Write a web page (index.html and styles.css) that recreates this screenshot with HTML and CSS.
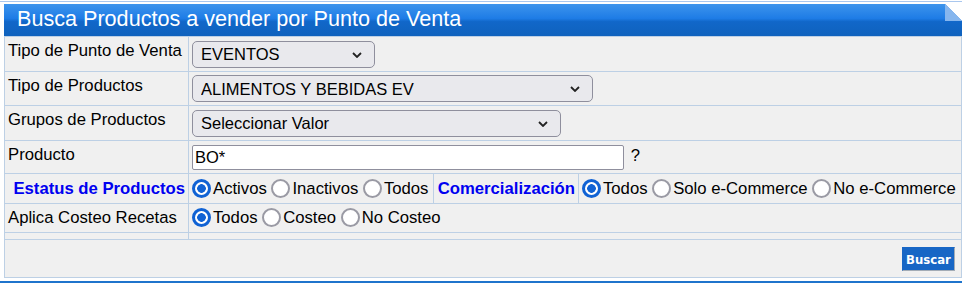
FILE: index.html
```html
<!DOCTYPE html>
<html lang="es">
<head>
    <meta charset="UTF-8">
    <title>Busca Productos a vender por Punto de Venta</title>
    <link rel="stylesheet" href="styles.css">
</head>
<body>
    <div class="topline"></div>

    <div class="panel">
        <div class="panel-header">Busca Productos a vender por Punto de Venta<span class="fold"></span></div>

        <table class="form-table">
            <colgroup>
                <col class="c1"><col class="c2"><col class="c3"><col class="c4">
            </colgroup>
            <tr class="r1">
                <td class="lbl">Tipo de Punto de Venta</td>
                <td colspan="3">
                    <span class="select-wrap w1">
                        <select><option>EVENTOS</option></select>
                        <svg class="chevron" width="10" height="6" viewBox="0 0 10 6"><path d="M1 1l4 4 4-4" fill="none" stroke="#222" stroke-width="1.8"/></svg>
                    </span>
                </td>
            </tr>
            <tr class="r2">
                <td class="lbl">Tipo de Productos</td>
                <td colspan="3">
                    <span class="select-wrap w2">
                        <select><option>ALIMENTOS Y BEBIDAS EV</option></select>
                        <svg class="chevron" width="10" height="6" viewBox="0 0 10 6"><path d="M1 1l4 4 4-4" fill="none" stroke="#222" stroke-width="1.8"/></svg>
                    </span>
                </td>
            </tr>
            <tr class="r3">
                <td class="lbl">Grupos de Productos</td>
                <td colspan="3">
                    <span class="select-wrap w3">
                        <select><option>Seleccionar Valor</option></select>
                        <svg class="chevron" width="10" height="6" viewBox="0 0 10 6"><path d="M1 1l4 4 4-4" fill="none" stroke="#222" stroke-width="1.8"/></svg>
                    </span>
                </td>
            </tr>
            <tr class="r4">
                <td class="lbl">Producto</td>
                <td colspan="3"><input class="text-input" type="text" value="BO*"> <span class="help">?</span></td>
            </tr>
            <tr class="r5">
                <td class="head">Estatus de Productos</td>
                <td>
                    <label class="opt"><input type="radio" name="estatus" checked>Activos</label>
                    <label class="opt"><input type="radio" name="estatus">Inactivos</label>
                    <label class="opt"><input type="radio" name="estatus">Todos</label>
                </td>
                <td class="head">Comercialización</td>
                <td>
                    <label class="opt"><input type="radio" name="comer" checked>Todos</label>
                    <label class="opt"><input type="radio" name="comer">Solo e-Commerce</label>
                    <label class="opt"><input type="radio" name="comer">No e-Commerce</label>
                </td>
            </tr>
            <tr class="r6">
                <td>Aplica Costeo Recetas</td>
                <td colspan="3">
                    <label class="opt"><input type="radio" name="costeo" checked>Todos</label>
                    <label class="opt"><input type="radio" name="costeo">Costeo</label>
                    <label class="opt"><input type="radio" name="costeo">No Costeo</label>
                </td>
            </tr>
            <tr class="r7">
                <td></td>
                <td colspan="3"></td>
            </tr>
        </table>

        <div class="actions">
            <button class="btn-buscar">Buscar</button>
        </div>
    </div>

    <div class="next-bar"></div>
</body>
</html>
```

FILE: styles.css
```css
body {
    margin: 0;
    font-family: "Liberation Sans", Arial, sans-serif;
    font-size: 16.7px;
    color: #000;
    background: #fff;
}
.topline {
    height: 1px;
    margin-top: 1px;
    background-color: #a9c7ee;
}
.panel {
    margin: 2px 0 0 4px;
}
.panel-header {
    position: relative;
    height: 32px;
    line-height: 30px;
    padding-left: 13px;
    font-size: 21.6px;
    color: #fff;
    background: linear-gradient(#3d94ec, #1e7ce6 45%, #1167c9 55%, #0f62bd);
}
.fold {
    position: absolute;
    top: 0;
    right: 0;
    width: 17px;
    height: 17px;
    background: linear-gradient(225deg, #fff 50%, #86b6ee 50%);
}
.form-table {
    width: 958px;
    table-layout: fixed;
    border-collapse: collapse;
    background-color: #f0f0f0;
}
.c1 { width: 184px; }
.c2 { width: 245px; }
.c3 { width: 145px; }
.form-table td {
    border: 1px solid #bdd0e5;
    padding: 0 3px;
    vertical-align: middle;
    white-space: nowrap;
}
.form-table td.lbl {
    vertical-align: top;
    padding-top: 4px;
}
.form-table td.head {
    text-align: right;
    font-weight: bold;
    color: #0000f0;
}
.r1 { height: 35px; }
.r2 { height: 34px; }
.r3 { height: 35px; }
.r4 { height: 33px; }
.r5 { height: 30px; }
.r6 { height: 29px; }
.r7 { height: 7px; }

.select-wrap {
    position: relative;
    display: inline-block;
    vertical-align: middle;
}
.select-wrap select {
    appearance: none;
    width: 100%;
    height: 27px;
    padding: 0 30px 0 8px;
    border: 1px solid #8f8f9d;
    border-radius: 5px;
    background-color: #e9e9ed;
    font-family: inherit;
    font-size: 16.5px;
    color: #000;
}
.select-wrap .chevron {
    position: absolute;
    right: 13px;
    top: 11px;
}
.w1 { width: 183px; }
.w2 { width: 401px; }
.w3 { width: 369px; }

.text-input {
    width: 432px;
    height: 25px;
    box-sizing: border-box;
    padding: 0 2px;
    border: 1px solid #8f8f9d;
    border-radius: 2px;
    background: #fff;
    font-family: inherit;
    font-size: 16.5px;
    vertical-align: middle;
}
.help {
    margin-left: 2px;
}

.opt input[type=radio] {
    appearance: none;
    width: 19px;
    height: 19px;
    margin: 0 2px 0 0;
    box-sizing: border-box;
    border: 2px solid #9a9aa4;
    border-radius: 50%;
    background: #fff;
    vertical-align: -4px;
}
.opt input[type=radio]:checked {
    border: 3px solid #1062d4;
    background: radial-gradient(circle, #1062d4 0 4px, #fff 4.6px);
}

.actions {
    padding: 7px 6px 0 0;
    box-sizing: border-box;
    height: 38px;
    border: 1px solid #bdd0e5;
    border-top: none;
    background-color: #f0f0f0;
    text-align: right;
}
.btn-buscar {
    width: 53px;
    height: 24px;
    padding: 0;
    border: 1px solid;
    border-color: #1766c5 #a3acb6 #a3acb6 #1766c5;
    background-color: #1766c5;
    color: #fff;
    font-family: "DejaVu Sans", Verdana, sans-serif;
    font-stretch: condensed;
    font-size: 13px;
    font-weight: bold;
}
.next-bar {
    margin-top: 3px;
    height: 3px;
    background-color: #1f74cc;
}
```
